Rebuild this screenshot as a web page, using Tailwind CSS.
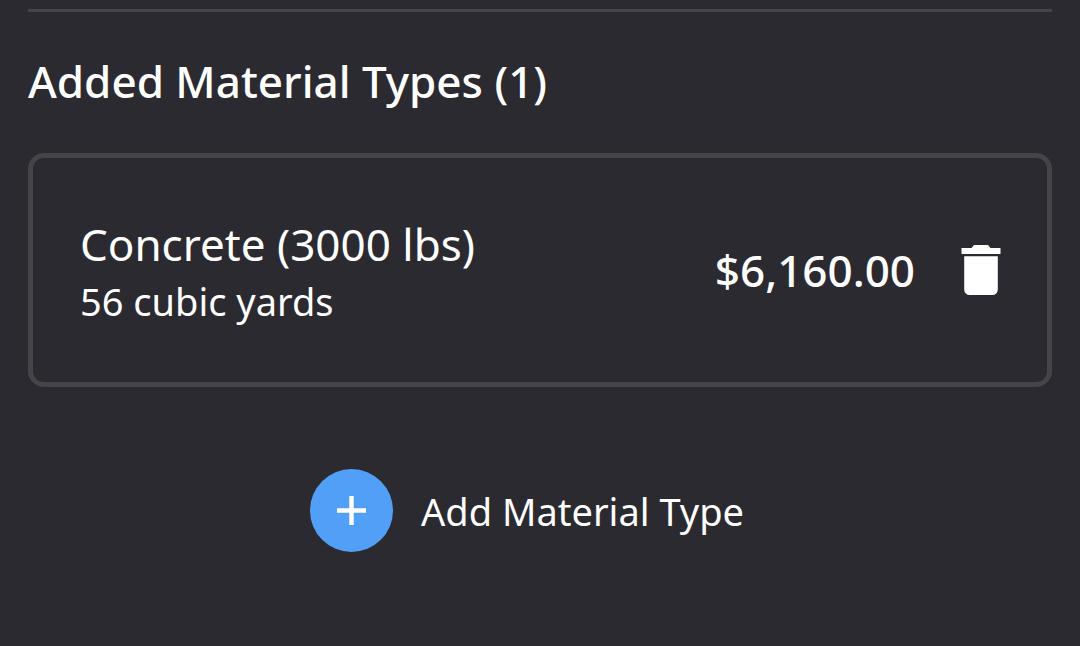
<!DOCTYPE html>
<html lang="en">
<head>
    <meta charset="UTF-8">
    <meta name="viewport" content="width=device-width, initial-scale=1.0">
    <title>Material Types</title>
    <script src="https://cdn.jsdelivr.net/npm/@tailwindcss/browser@4"></script>
</head>
<body class="min-h-screen bg-[#2b2a30] px-7 pt-[9px] font-['Noto_Sans',sans-serif] text-white">
    <main>
        <hr class="border-t-3 border-[#454449]">

        <section class="pt-10">
            <h2 class="text-[44px] leading-[58px] font-medium">Added Material Types (1)</h2>

            <ul class="mt-[43px]">
                <li class="flex items-center rounded-2xl border-5 border-[#454449] py-[55px] pr-[46px] pl-[47px]">
                    <div class="flex-1">
                        <p class="text-[44px] leading-[62px]">Concrete (3000 lbs)</p>
                        <p class="text-[38px] leading-[52px]">56 cubic yards</p>
                    </div>
                    <span class="text-[44px] leading-[62px] font-medium">$6,160.00</span>
                    <button type="button" aria-label="Remove Concrete (3000 lbs)" class="ml-[46px] cursor-pointer">
                        <svg class="h-[50px] w-10" viewBox="0 0 40 50" fill="currentColor" aria-hidden="true">
                            <path d="M.5 3H10.500l2.500-3h14l2.500 3H39.500v6H.5zM3.200 11.200h33.600V44.500a5.500 5.500 0 0 1-5.500 5.500H8.700a5.500 5.500 0 0 1-5.500-5.500z"/>
                        </svg>
                    </button>
                </li>
            </ul>
        </section>

        <div class="mt-[82px] flex justify-center pr-[26px]">
            <button type="button" class="flex cursor-pointer items-center gap-7">
                <span class="flex size-[83px] items-center justify-center rounded-full bg-[#529ff8]">
                    <svg class="size-[31px]" viewBox="0 0 31 31" stroke="currentColor" stroke-width="4.400" aria-hidden="true">
                        <path d="M15.500 1v29M1 15.500h29"/>
                    </svg>
                </span>
                <span class="text-[38px] leading-[52px]">Add Material Type</span>
            </button>
        </div>
    </main>
</body>
</html>
